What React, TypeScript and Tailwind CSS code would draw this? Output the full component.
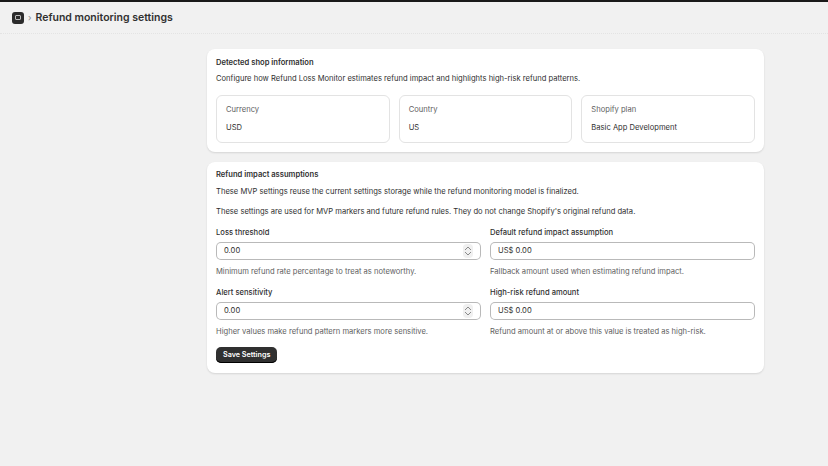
import React from "react";

const Spin = () => (
  <div className="flex flex-col items-center justify-center w-[10px] h-[14px] bg-[#f0f0f0] rounded-sm">
    <svg width="8" height="5" viewBox="0 0 8 5"><path d="M1 4 L4 1 L7 4" fill="none" stroke="#8a8a8a" strokeWidth="1"/></svg>
    <svg width="8" height="5" viewBox="0 0 8 5"><path d="M1 1 L4 4 L7 1" fill="none" stroke="#8a8a8a" strokeWidth="1"/></svg>
  </div>
);

const Field = ({ label, value, help, spin }: { label: string; value: string; help: string; spin?: boolean }) => (
  <div className="flex flex-col">
    <div className="text-[7.6px] leading-[10px] text-[#303030] font-medium mb-[4px]">{label}</div>
    <div className="h-[18px] border border-[#8a8a8a]/60 rounded-[5px] bg-white flex items-center justify-between px-[7px] text-[7.6px] text-[#303030]">
      <span>{value}</span>
      {spin && <Spin />}
    </div>
    <div className="text-[7.6px] leading-[10px] text-[#616161] mt-[7px]">{help}</div>
  </div>
);

export default function App() {
  return (
    <div className="w-[828px] h-[466px] bg-[#f1f1f1] border-t-2 border-[#1a1a1a]" style={{ fontFamily: "Inter, 'Noto Sans', sans-serif" }}>
      <div className="h-[32px] flex items-center px-[12px] gap-[4px] border-b border-dotted border-[#e3e3e3]">
        <div className="w-[12px] h-[12px] rounded-[3px] bg-[#2b2b2b] flex items-center justify-center">
          <div className="w-[6px] h-[5px] border border-[#bbb] rounded-[1px]" />
        </div>
        <span className="text-[#8a8a8a] text-[9px]">›</span>
        <span className="text-[10.5px] font-semibold text-[#303030]">Refund monitoring settings</span>
      </div>
      <div className="w-[557px] ml-[207px] mt-[15px] flex flex-col gap-[10px] text-[7.6px] leading-[10px]">
        <div className="bg-white rounded-[8px] shadow-[0_1px_2px_rgba(0,0,0,0.12)] px-[9px] pt-[9px] pb-[9px]">
          <div className="font-semibold text-[#303030]">Detected shop information</div>
          <div className="text-[#303030] mt-[6px]">Configure how Refund Loss Monitor estimates refund impact and highlights high-risk refund patterns.</div>
          <div className="grid grid-cols-3 gap-[9px] mt-[11px]">
            {[["Currency", "USD"], ["Country", "US"], ["Shopify plan", "Basic App Development"]].map(([a, b]) => (
              <div key={a} className="border border-[#e3e3e3] rounded-[6px] h-[48px] px-[9px] pt-[9px]">
                <div className="text-[#616161]">{a}</div>
                <div className="text-[#303030] mt-[8px]">{b}</div>
              </div>
            ))}
          </div>
        </div>
        <div className="bg-white rounded-[8px] shadow-[0_1px_2px_rgba(0,0,0,0.12)] px-[9px] pt-[8px] pb-[10px]">
          <div className="font-semibold text-[#303030]">Refund impact assumptions</div>
          <div className="text-[#303030] mt-[7px]">These MVP settings reuse the current settings storage while the refund monitoring model is finalized.</div>
          <div className="text-[#303030] mt-[10px]">These settings are used for MVP markers and future refund rules. They do not change Shopify's original refund data.</div>
          <div className="grid grid-cols-2 gap-x-[9px] gap-y-[11px] mt-[11px]">
            <Field label="Loss threshold" value="0.00" help="Minimum refund rate percentage to treat as noteworthy." spin />
            <Field label="Default refund impact assumption" value="US$ 0.00" help="Fallback amount used when estimating refund impact." />
            <Field label="Alert sensitivity" value="0.00" help="Higher values make refund pattern markers more sensitive." spin />
            <Field label="High-risk refund amount" value="US$ 0.00" help="Refund amount at or above this value is treated as high-risk." />
          </div>
          <button className="mt-[10px] h-[16px] px-[7px] rounded-[5px] bg-[#303030] text-white text-[7.2px] font-semibold shadow-[inset_0_-1px_0_#000]">Save Settings</button>
        </div>
      </div>
    </div>
  );
}
